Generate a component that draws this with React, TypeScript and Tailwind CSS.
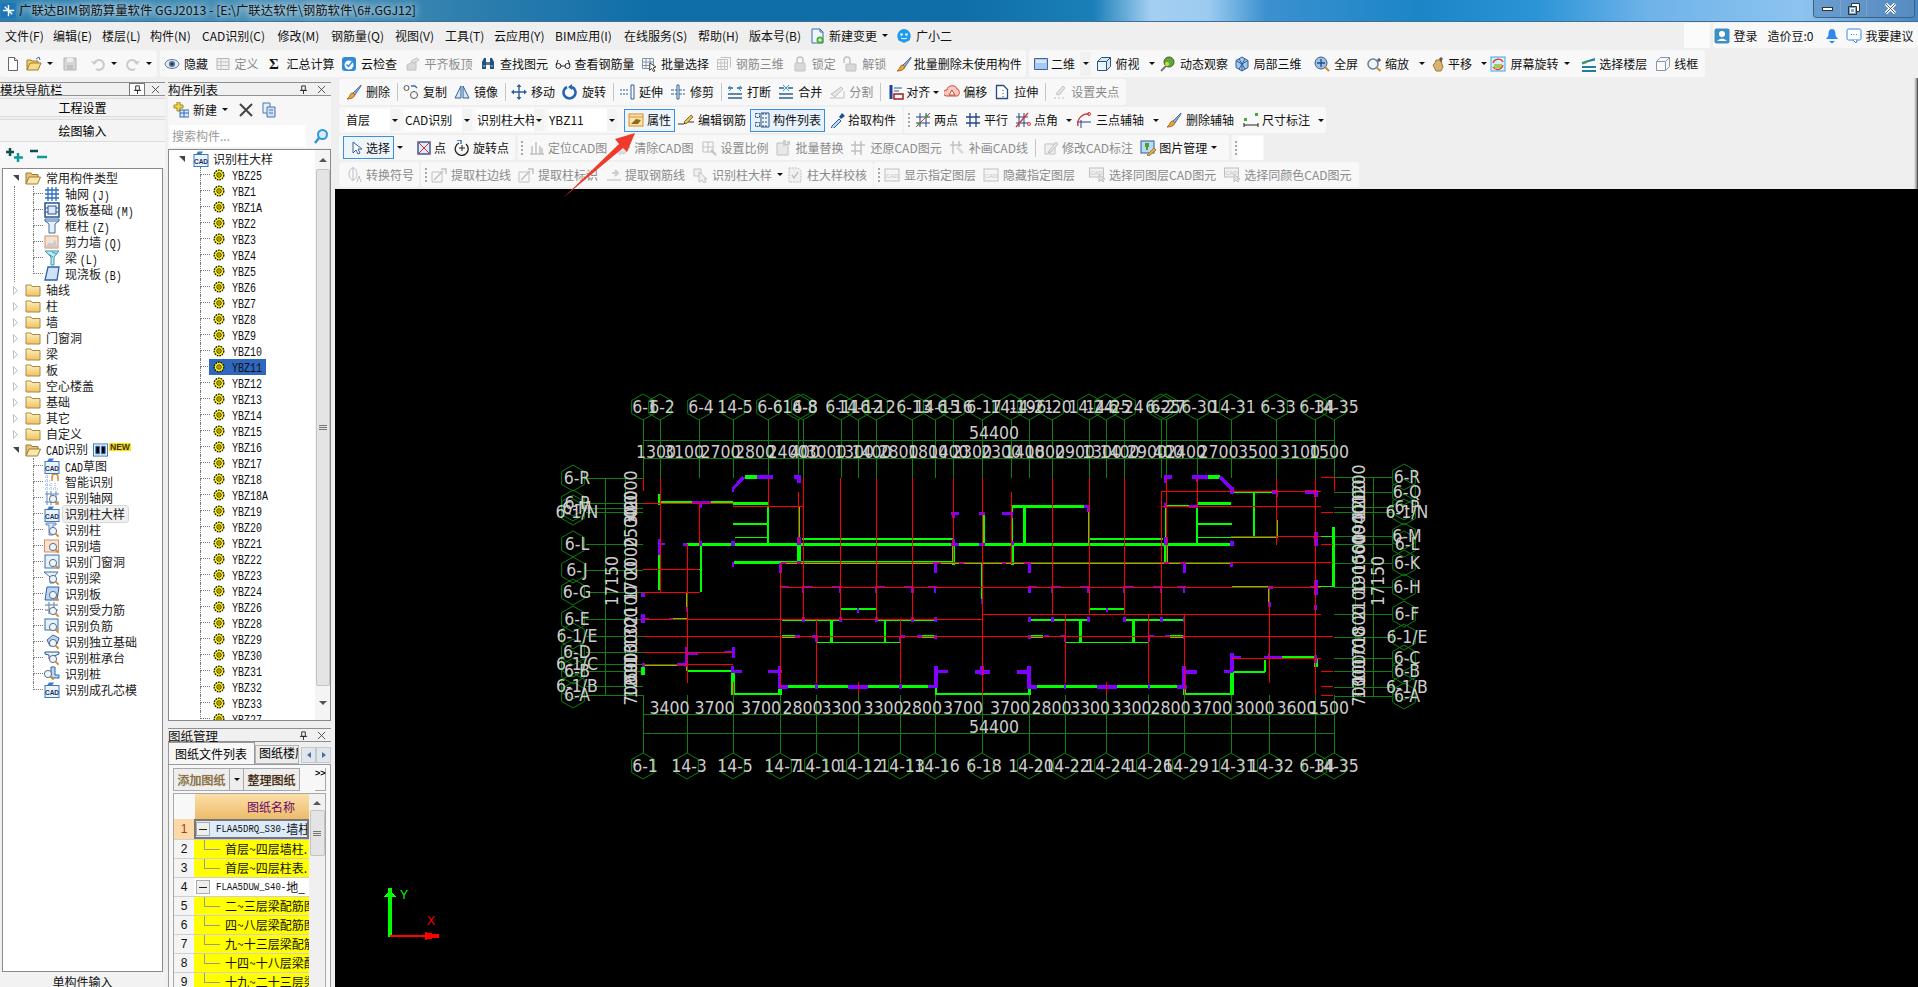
import React from 'react';
import clsx from 'clsx';

type Seg = [number, number, number, number, number];

const S = ({ children }: { children: React.ReactNode }) => (
  <svg viewBox="0 0 16 16" className="w-4 h-4 shrink-0" fill="none">{children}</svg>
);

// small toolbar and tree icons
const mag = (
  <g>
    <circle cx="9" cy="9" r="3.6" fill="#eef5fb" stroke="#5b6f85" />
    <path d="M11.6 11.6l3 3" stroke="#d98a2b" strokeWidth="2" />
  </g>
);
const cadBox = (
  <g>
    <rect x="1" y="3.5" width="14" height="12" fill="#eaf2fb" stroke="#3d78c0" />
    <path d="M3 3.5l2-3h5l-2 3" fill="#3d78c0" />
    <text x="8" y="13" textAnchor="middle" fontSize="6.5" fontWeight="700" fill="#16345e" fontFamily="Liberation Sans">CAD</text>
  </g>
);
const I: Record<string, React.ReactNode> = {
  doc: <S><path d="M3.5 1.5h6l3 3v10h-9z" fill="#fff" stroke="#666" /><path d="M9.5 1.5v3h3" fill="#ddd" stroke="#666" /></S>,
  open: <S><path d="M1 14V4h4l1 1h6v2" fill="#f0cf78" stroke="#a07a2a" /><path d="M1 14l3-7h11l-3 7z" fill="#f7dc8c" stroke="#a07a2a" /><path d="M10 3l3-2 1 3" stroke="#2f6fb5" /></S>,
  save: <S><path d="M2 2h12v12H2z" fill="#c9c9c9" stroke="#9a9a9a" /><path d="M5 2h6v4H5z" fill="#eee" /><path d="M5 9h6v5H5z" fill="#aaa" /></S>,
  undo: <S><path d="M4 8a5 5 0 1 1 2 5" stroke="#b8b8b8" strokeWidth="2" /><path d="M1 5l3 4 3-3" fill="#b8b8b8" /></S>,
  redo: <S><path d="M12 8a5 5 0 1 0-2 5" stroke="#b8b8b8" strokeWidth="2" /><path d="M15 5l-3 4-3-3" fill="#b8b8b8" /></S>,
  eye: <S><ellipse cx="8" cy="8" rx="7" ry="4.5" fill="#dfe8ef" stroke="#667c8e" /><circle cx="8" cy="8" r="3" fill="#4c7396" /><circle cx="8" cy="8" r="1.2" fill="#16304a" /></S>,
  table: <S><path d="M2 2.5h12v11H2z" fill="#eee" stroke="#999" /><path d="M2 6h12M2 9.500h12M6 2.500v11" stroke="#aaa" /></S>,
  cloud: <S><rect x="1" y="1" width="14" height="14" rx="3" fill="#2f8bd8" /><circle cx="8" cy="9" r="4.500" fill="#fff" /><path d="M5.500 8.500l2 2 4-5" stroke="#2f8bd8" strokeWidth="1.500" /></S>,
  level: <S><path d="M2 14V9l9-5v10z" fill="#ccc" stroke="#aaa" /><path d="M6 5l6-3 2 2-6 3z" fill="#ddd" stroke="#aaa" /></S>,
  binoc: <S><path d="M2 13V6l2-4h2v11zM14 13V6l-2-4h-2v11z" fill="#27507f" /><path d="M6 6h4v3H6z" fill="#55779c" /><path d="M2.800 10h2.500M10.700 10h2.500" stroke="#a9c3dd" /></S>,
  glass: <S><circle cx="3.500" cy="10" r="2.500" stroke="#222" /><circle cx="12.500" cy="10" r="2.500" stroke="#222" /><path d="M6 10h4M1 9l2-5M15 9l-2-5" stroke="#222" /></S>,
  batch: <S><path d="M1.500 2.500h11v10h-11zM1.500 6h11M1.500 9.500h11M5 2.500v10M9 2.500v10" stroke="#7f93ab" /><path d="M9 7l6 4-3 1 2 3-1.500 .5-2-3-2 2z" fill="#fff" stroke="#444" /></S>,
  grid3: <S><path d="M1.500 3.500h10v10h-10zM4.500 1.500h10v10M1.500 7h10M1.500 10.500h10M5 3.500v10M8.500 3.500v10" stroke="#aaa" /></S>,
  lock: <S><rect x="3" y="7" width="10" height="8" rx="1" fill="#ccc" stroke="#aaa" /><path d="M5 7V4a3 3 0 0 1 6 0v3" stroke="#aaa" strokeWidth="1.500" /></S>,
  unlock: <S><rect x="4" y="8" width="10" height="7" rx="1" fill="#ccc" stroke="#aaa" /><path d="M2 7V4a3 3 0 0 1 6 0v4" stroke="#aaa" strokeWidth="1.500" /></S>,
  brush: <S><path d="M15 1L7 9l2 2 6-9z" fill="#8eaed6" stroke="#56719a" /><path d="M7 9l-2 .5C4 11 3 14 1 15c3 0 7-1 8-4z" fill="#e8a23e" stroke="#a96b1c" /></S>,
  v2d: <S><path d="M1.500 2.500h13v11h-13z" fill="#a9c8ef" stroke="#3a66ae" /><path d="M3 4h10v3H3z" fill="#d8e7f8" /></S>,
  cube: <S><path d="M1.500 5.500l4-4h9v9l-4 4h-9z" fill="#d5e6f5" stroke="#28527f" /><path d="M1.500 5.500h9v9M10.500 5.500l4-4" stroke="#28527f" /><path d="M2 6h8v8H2z" fill="#eaf5fc" /></S>,
  orbit: <S><circle cx="9" cy="6" r="5" fill="#5fa63a" stroke="#2e6b1c" /><path d="M1 15l6-6" stroke="#777" strokeWidth="2" /><circle cx="7" cy="8" r="2" fill="#e9d049" /></S>,
  local3d: <S><path d="M8 1l6 3.500v7L8 15l-6-3.500v-7z" fill="#a8c7e8" stroke="#2c5c9a" /><path d="M8 8v7M2 4.500L8 8l6-3.500M5 3l6 10M11 3L5 13" stroke="#2c5c9a" /></S>,
  full: <S><circle cx="7" cy="7" r="6" fill="#9fbfe0" stroke="#38608f" /><path d="M7 3v8M3 7h8" stroke="#1f4f86" strokeWidth="1.300" /><path d="M11 11l4 4" stroke="#c98a2d" strokeWidth="2" /></S>,
  zoom: <S><circle cx="7" cy="8" r="5" fill="#eef5fb" stroke="#667f99" strokeWidth="1.500" /><path d="M11 12l3.500 3" stroke="#c98a2d" strokeWidth="2" /><path d="M13 2v4M11 4h4" stroke="#333" /></S>,
  hand: <S><path d="M3 9l2-2 1-3h5l1 4 1 3-2 4H6z" fill="#d7b36d" stroke="#9b7a3c" /><path d="M11 1v5M9 3h4" stroke="#333" /></S>,
  spin: <S><rect x="1" y="1" width="14" height="14" fill="#d7eefa" stroke="#45a3da" /><path d="M4 12V8h8v4z" fill="#a4cb5a" /><path d="M3 7a5.500 5.500 0 0 1 10-1M13 9a5.500 5.500 0 0 1-10 2" stroke="#e23b2e" strokeWidth="1.300" /></S>,
  floors: <S><path d="M1 6l13-4v2.500L1 7.500zM1 10h14v2H1zM1 14h14v2H1z" fill="#1f7f9e" /><path d="M1 7.500L6 6" stroke="#3fa14a" strokeWidth="2" /></S>,
  wire: <S><path d="M1.500 5.500l4-4h9v9l-4 4h-9zM1.500 5.500h9v9M10.500 5.500l4-4" stroke="#8796a9" /></S>,
  copy: <S><circle cx="3.500" cy="4" r="2.500" stroke="#555" /><circle cx="11" cy="11" r="3.500" stroke="#555" /><path d="M8 2h4l2 2" stroke="#2f6fb5" strokeWidth="1.300" /></S>,
  mirror: <S><path d="M7 2L1 14h6zM9 2l6 12H9z" stroke="#2d5f97" fill="#d6e4f2" /></S>,
  move: <S><path d="M8 1v14M1 8h14" stroke="#2d5f97" strokeWidth="1.400" /><path d="M8 0l2.500 3h-5zM8 16l2.500-3h-5zM0 8l3-2.500v5zM16 8l-3-2.500v5z" fill="#2d5f97" /></S>,
  rot: <S><path d="M5 3a6 6 0 1 0 5 0" stroke="#2464b0" strokeWidth="2.600" /><path d="M10 0v6L6 3z" fill="#2464b0" /></S>,
  extend: <S><path d="M1 6h9M1 10h9" stroke="#2d5f97" strokeDasharray="2 1" /><path d="M12 1h3v14h-3z" stroke="#2d5f97" /></S>,
  trim: <S><path d="M1 6h14M1 10h14" stroke="#2d5f97" strokeDasharray="3 1" /><path d="M7 1h2v14H7z" fill="#fff" stroke="#2d5f97" /></S>,
  cut: <S><path d="M1 4h5M10 4h5M1 14h14M1 10h14" stroke="#2d5f97" strokeWidth="1.300" /><path d="M2 7l3-3-3-2M14 7l-3-3 3-2" stroke="#2d9ad0" /></S>,
  merge: <S><path d="M1 10h14M1 14h14M1 4h5M10 4h5" stroke="#2d5f97" strokeWidth="1.300" /><path d="M5 1l3 3-3 3M11 1L8 4l3 3" stroke="#2d9ad0" /></S>,
  split: <S><path d="M1 14h14V7" stroke="#aaa" /><path d="M2 10l10-7 2 2-8 8z" fill="#ddd" stroke="#aaa" /></S>,
  align: <S><path d="M3 1v14" stroke="#1f3f9a" strokeWidth="3" /><path d="M6 15h9v-5H6z" stroke="#a01e1e" strokeWidth="1.500" /><path d="M6 4h8M6 7h5" stroke="#2d5f97" /></S>,
  offset: <S><path d="M2 12a3 3 0 0 1 1-6c0-5 9-6 10-1 3 0 3 7 0 7z" fill="#f7c9c0" stroke="#c9473a" /><path d="M5 11h6l-3-5z" fill="#fff" stroke="#c9473a" /></S>,
  stretch: <S><path d="M2.500 1.500h7l4 4v9h-11z" fill="#fff" stroke="#264b7d" strokeWidth="1.300" /><path d="M9 6v1M9 9v1M9 12v1" stroke="#264b7d" /></S>,
  grip: <S><path d="M3 14h2M7 14h2M11 14h2" stroke="#aaa" /><path d="M5 10l7-8 2 2-6 7z" fill="#ddd" stroke="#aaa" /></S>,
  prop: <S><rect x="1" y="2" width="14" height="12" fill="#fbe3b3" stroke="#e08a1e" /><path d="M1 5h14" stroke="#e08a1e" /><path d="M3 12l5-5 5 1-3 4z" fill="#8a6a1e" /></S>,
  rebar: <S><path d="M0 12h6l2-2h8" stroke="#333" /><path d="M6 10l7-7 2 2-7 7z" fill="#e6c25a" stroke="#8a6a1e" /></S>,
  list: <S><path d="M1.500 1.500h4v4h-4zM1.500 10.500h4v4h-4zM8 2h6M8 6h6M8 10h6M8 14h6" stroke="#27507f" strokeDasharray="2 1" /><path d="M7 1h8v14H7z" stroke="#27507f" /></S>,
  dropper: <S><path d="M2 14l7-7 2 2-7 7-3 1z" fill="#b8d7f2" stroke="#2d5f97" /><path d="M9 5l3-4 3 3-4 3z" fill="#1d4f96" /></S>,
  twopt: <S><path d="M5 1v14M11 1v14M1 5h14M1 11h14" stroke="#24448a" /><path d="M1 15L15 1" stroke="#d2342c" /><circle cx="4" cy="12" r="1.500" fill="#4a9e2f" /><circle cx="12" cy="4" r="1.500" fill="#4a9e2f" /></S>,
  para: <S><path d="M5 1v14M11 1v14M1 5h14M1 11h14" stroke="#24448a" strokeWidth="1.300" /></S>,
  angle: <S><path d="M4 1v14M9 1v14M1 5h12M1 11h12" stroke="#24448a" /><path d="M1 15L13 1" stroke="#d2342c" strokeWidth="1.300" /><circle cx="14" cy="12" r="1.500" stroke="#d2342c" /></S>,
  arc3: <S><path d="M5 16V8M1 10h14" stroke="#24448a" /><path d="M2 14A10 10 0 0 1 13 2" stroke="#d2342c" strokeWidth="1.300" /><circle cx="13" cy="2" r="1.500" stroke="#d2342c" /></S>,
  dim: <S><rect x="1" y="6" width="3" height="3" fill="#3cae3c" /><rect x="12" y="1" width="3" height="3" fill="#3cae3c" /><path d="M1 11v4M15 11v4M1 13h14" stroke="#222" /></S>,
  select: <S><path d="M4 2v11l3-3 2 4 2-1-2-4h4z" fill="#fff" stroke="#3a5f8f" /></S>,
  point: <S><rect x="2" y="2" width="12" height="12" fill="#dfe8f5" stroke="#27448a" strokeWidth="1.300" /><path d="M2 2l12 12M14 2L2 14" stroke="#d2342c" /></S>,
  rotpt: <S><path d="M5 3a6.500 6.500 0 1 0 7 1" stroke="#222" strokeWidth="1.300" /><path d="M8 5v6M5 8h6" stroke="#222" /><path d="M3 0h4v4" stroke="#2464b0" strokeWidth="1.300" /></S>,
  locate: <S><path d="M1 14h14M3 14V6M7 14V2M11 14V6M13 14V8" stroke="#aaa" strokeWidth="1.500" /></S>,
  erase: <S><path d="M2 10l6-7 6 4-6 7z" fill="#ddd" stroke="#aaa" /><circle cx="4" cy="13" r="2" fill="#ccc" /></S>,
  scale: <S><path d="M2 2h10v10H2zM2 7h10M7 2v10" stroke="#aaa" /><path d="M10 10l5 5" stroke="#aaa" strokeWidth="2" /></S>,
  swap: <S><path d="M2 3h8l3 3v9H2z" fill="#e2e2e2" stroke="#aaa" /><path d="M8 0h3v6H8zM12 1h3v4h-3z" fill="#bbb" /></S>,
  restore: <S><path d="M1 5h14M1 11h10M5 1v14M11 1v14" stroke="#aaa" strokeWidth="1.500" /></S>,
  patch: <S><path d="M1 5h12M4 1v13M10 1v6" stroke="#aaa" strokeWidth="1.500" /><path d="M7 8l6 6 2-2-6-5z" fill="#ccc" /></S>,
  modify: <S><path d="M2 4h10v10H2z" fill="#eee" stroke="#aaa" /><path d="M6 11l7-9 2 2-7 8-3 1z" fill="#ddd" stroke="#aaa" /></S>,
  pic: <S><rect x="1" y="1" width="13" height="12" fill="#bcd8f4" stroke="#2c5c9a" /><path d="M5 3h4v4H8v3H6V7H5z" fill="#4aa02c" /><path d="M7 15l7-7 2 2-7 6z" fill="#e6b23d" stroke="#9b7a3c" /></S>,
  symbol: <S><ellipse cx="6" cy="7" rx="4" ry="6" stroke="#aaa" /><path d="M6 0v14M10 15l2-6 2 6" stroke="#aaa" /></S>,
  edgeOut: <S><path d="M1 15V5h10v10z" stroke="#aaa" /><path d="M3 13l9-9M10 2h5v5" stroke="#aaa" strokeWidth="1.500" /></S>,
  pull: <S><path d="M1 12h14v2H1z" fill="#ccc" /><path d="M6 6h6M9 3l3 3-3 3" stroke="#bbb" strokeWidth="2" /></S>,
  cursor: <S><path d="M2 2h7v7H2z" fill="#eee" stroke="#aaa" /><path d="M7 5v10l3-2 2 3 2-1-2-3h3z" fill="#eee" stroke="#aaa" /></S>,
  check: <S><path d="M2 1h9l3 3v11H2z" fill="#eee" stroke="#aaa" strokeDasharray="2 1" /><path d="M5 8l2 3 4-6" stroke="#aaa" strokeWidth="1.500" /></S>,
  cadGray: <S><rect x="1" y="2" width="14" height="12" fill="#f5f5f5" stroke="#aaa" /><text x="8" y="10.500" textAnchor="middle" fontSize="6" fill="#aaa" fontFamily="Liberation Sans">CAD</text></S>,
  cadSel: <S><rect x="0.500" y="1" width="14" height="9" fill="#eee" stroke="#aaa" /><text x="7.500" y="8" textAnchor="middle" fontSize="6" fill="#aaa" fontFamily="Liberation Sans">CAD</text><path d="M10 8v7l2-2 2 2 1-1-2-2h3z" fill="#ddd" stroke="#aaa" /></S>,
  newdoc: <S><path d="M3 1h8l3 3v11H3z" fill="#f0f6fd" stroke="#2f6fb5" /><path d="M11 1v3h3" stroke="#2f6fb5" /><circle cx="11" cy="12" r="3.500" fill="#4dab2f" /><path d="M11 10v4M9 12h4" stroke="#fff" /></S>,
  buddy: <S><path d="M8 1a7 7 0 0 1 6 10c-1 3-3 2-4 3-1 1-3 1-4 0-1-1-3 0-4-3A7 7 0 0 1 8 1z" fill="#1e9be8" /><circle cx="5.500" cy="6.500" r="1.300" fill="#fff" /><circle cx="10.500" cy="6.500" r="1.300" fill="#fff" /><path d="M5 10q3 2 6 0" stroke="#fff" /></S>,
  user: <S><rect x="0.500" y="0.500" width="15" height="15" rx="2" fill="#3f8fc7" /><circle cx="8" cy="6" r="3" fill="#fff" /><path d="M3 13q5-5 10 0z" fill="#fff" /></S>,
  bell: <S><path d="M8 1c3 0 3.500 3 3.500 6 0 2 2.500 3 2.500 4H2c0-1 2.500-2 2.500-4C4.500 4 5 1 8 1z" fill="#2e86ee" /><path d="M5 13h6l-3 2.500z" fill="#2e86ee" /></S>,
  talk: <S><rect x="1" y="1" width="14" height="11" rx="1.500" fill="#fff" stroke="#2e86ee" /><path d="M7 12l3 3 1-3" fill="#fff" stroke="#2e86ee" /><path d="M5 6.500h1M7.500 6.500h1M10 6.500h1" stroke="#2e86ee" /></S>,
  plusdoc: <S><path d="M1 3h3V0h3v3h3v3H7v3H4V6H1z" fill="#f0d24a" stroke="#a58a1e" /><rect x="7" y="8" width="9" height="7" fill="#dbe9f7" stroke="#2f6fb5" /><path d="M7 11h9M11 8v7" stroke="#2f6fb5" /></S>,
  x: <S><path d="M2 2l12 12M14 2L2 14" stroke="#444" strokeWidth="2" /></S>,
  dup: <S><path d="M2 1h7v10H2z" fill="#e8f0fa" stroke="#4877ad" /><path d="M6 5h8v10H6z" fill="#cfe0f4" stroke="#4877ad" /><path d="M8 8h4M8 11h4" stroke="#4877ad" /></S>,
  search: <S><circle cx="9.500" cy="6.500" r="4.500" fill="#d6ecfb" stroke="#3097d8" strokeWidth="2" /><path d="M6 10l-4 5" stroke="#3097d8" strokeWidth="2.500" /></S>,
  folderOpen: <S><path d="M1 14V3h5l1 1.500h6V7" fill="#e7c56f" stroke="#9b7a3c" /><path d="M1 14l3-7h11.500l-3 7z" fill="#fbe7a8" stroke="#9b7a3c" /></S>,
  folder: <S><path d="M1 14V3h5l1 1.500h8V14z" fill="url(#fld)" stroke="#a98a45" /></S>,
  axis: <S><path d="M4 1v14M8 1v14M12 1v14M1 4h14M1 8h14M1 12h14" stroke="#2f6ec0" strokeWidth="1.300" /></S>,
  raft: <S><rect x="1" y="1" width="14" height="14" stroke="#24528e" strokeWidth="1.500" /><rect x="4" y="4" width="8" height="8" fill="#dbe9f7" stroke="#24528e" /><path d="M1 6h3M1 10h3M12 6h3M12 10h3" stroke="#24528e" /></S>,
  col: <S><path d="M1 1h14v2l-4 3v9H5V6L1 3z" fill="#e7eff7" stroke="#3b6ea8" /><path d="M1 3h14" stroke="#3b6ea8" /></S>,
  wall: <S><rect x="1" y="2" width="13" height="12" fill="#f3e3d6" stroke="#d8905d" /><path d="M2 12l3-4 3 2 3-5 2 8H2z" fill="#ccc" /></S>,
  beam: <S><path d="M1 1h14l-5 6v8H7V7z" fill="#bfe6f3" stroke="#3796b5" /><path d="M4 4l5 3M8 2l5 2" stroke="#3796b5" /></S>,
  slab: <S><path d="M4 1h11l-2 13H1z" fill="#cfe2f6" stroke="#2a62ad" strokeWidth="1.300" /></S>,
  cad: <S>{cadBox}</S>,
  smart: <S><path d="M1 3h4M1 7h6M1 11h6M1 15h14M3 1v14M7 9v6M11 9v6" stroke="#7aa9dc" strokeDasharray="1 1" /><path d="M8 7V3a3 3 0 0 1 6 0v4" stroke="#d98a2b" strokeWidth="1.500" /></S>,
  dAxis: <S><path d="M3 1v14M7 1v14M12 1v14M1 4h14M1 12h14" stroke="#5c86c2" />{mag}</S>,
  dCad: <S>{cadBox}</S>,
  dCol: <S><path d="M2 1h10v2H9v10H5V3H2z" fill="#dbe9f7" stroke="#5c86c2" />{mag}</S>,
  dWall: <S><rect x="0.500" y="2" width="14" height="12" fill="#f9e2d3" stroke="#df8b5f" />{mag}</S>,
  dDoor: <S><rect x="1" y="1" width="14" height="13" fill="#e8f1fa" stroke="#3c6fb5" />{mag}</S>,
  dBeam: <S><path d="M0 2h14l-4 5v6H6V7z" fill="#e8f1fa" stroke="#3c6fb5" />{mag}</S>,
  dSlab: <S><path d="M3 1h12l-2 13H1z" fill="#bcd6f2" stroke="#2a62ad" />{mag}</S>,
  dBar: <S><path d="M1 3h13M1 8h13M5 0v12M10 0v12" stroke="#8a9fb8" strokeWidth="1.500" />{mag}</S>,
  dNeg: <S><rect x="1" y="1" width="13" height="11" fill="#e8f1fa" stroke="#2f6fb5" />{mag}</S>,
  dFound: <S><path d="M3 6l6-5 6 3-2 6-7 2z" fill="#bcd6f2" stroke="#2a62ad" />{mag}</S>,
  dCap: <S><path d="M1 2h14v2l-5 2v3H5V5L1 4z" fill="#e8f1fa" stroke="#24528e" />{mag}</S>,
  dPile: <S><path d="M7 1h4v8h4v3H7z" fill="#bcd6f2" stroke="#2a62ad" /><g transform="translate(-5 -1)">{mag}</g></S>,
  gear: <S><circle cx="8" cy="8" r="5.500" fill="#fff200" stroke="#111" strokeDasharray="2 1" strokeWidth="1.500" /><circle cx="8" cy="8" r="2.500" fill="#fff200" stroke="#111" /><circle cx="8" cy="8" r=".8" fill="#111" /></S>,
};

const Caret = ({ className }: { className?: string }) => (
  <span className={clsx('w-0 h-0 border-x-[3px] border-t-[3px] border-x-transparent border-t-[#111] shrink-0', className)} />
);

const Sep = ({ tight }: { tight?: boolean }) => <span className={clsx('w-px h-[18px] bg-[#c6c6c6] shrink-0', tight && '-mr-[2px]')} />;

const Grip = ({ className }: { className?: string }) => (
  <span className={clsx('flex flex-col gap-[2px] shrink-0', className)}>
    <span className="w-[2px] h-[2px] bg-[#a8a8a8]" />
    <span className="w-[2px] h-[2px] bg-[#a8a8a8]" />
    <span className="w-[2px] h-[2px] bg-[#a8a8a8]" />
    <span className="w-[2px] h-[2px] bg-[#a8a8a8]" />
  </span>
);

type ToolProps = { icon: string; label?: string; off?: boolean; dd?: boolean; ddWide?: boolean; gap?: string; box?: string; className?: string };

const Tool = ({ icon, label, off, dd, ddWide, gap, box, className }: ToolProps) => (
  <div className={clsx('flex items-center whitespace-nowrap shrink-0', gap ?? 'gap-[4px]', box ?? 'h-[22px]', off ? 'text-[#8b8b8b]' : 'text-[#111]', className)}>
    <span className={off ? 'flex opacity-70' : 'flex'}>{I[icon]}</span>
    {label && <span>{label}</span>}
    {dd && <Caret className="ml-[1px]" />}
    {ddWide && <Caret className="ml-[5px]" />}
  </div>
);

const Band = ({ children, className }: { children: React.ReactNode; className?: string }) => (
  <div className={clsx('flex items-center rounded-[3px] bg-[#f8f8f8] shrink-0', className)}>{children}</div>
);

const Combo = ({ text, className }: { text: string; className: string }) => (
  <div className={clsx('flex items-center h-[22px] bg-white shrink-0', className)}>
    <span className="flex-1 overflow-hidden whitespace-nowrap pl-[1px] text-[#111]">{text}</span>
    <span className="w-[10px] h-full bg-[#f3f3f3] flex items-center justify-center"><Caret /></span>
  </div>
);

const TitleBar = () => (
  <div className="relative h-[22px] shrink-0 border-b border-[#3f6f94] bg-[linear-gradient(90deg,#2a7faf_0%,#4f93b8_16%,#2f7fae_24%,#0f6ea8_34%,#0f6ea8_50%,#1a7fb8_57%,#a3cff2_60%,#9ccbf0_63%,#3c90d0_66%,#1a86c6_74%,#2a94d6_80%,#6fb3ea_86%,#8dc4ef_94%,#4a85c0_100%)] flex items-start">
    <svg viewBox="0 0 16 16" className="w-[15px] h-[15px] ml-[1px] mt-[3px] shrink-0">
      <rect width="16" height="16" fill="#1d74b7" />
      <path d="M8 2v12M2 8h12M4 4l3 3M12 12l-3-3" stroke="#fff" strokeWidth="1.500" />
    </svg>
    <span className="ml-[3px] mt-[3px] text-[12.400px] leading-[15px] text-[#111] whitespace-nowrap [text-shadow:0_0_6px_#dfeef8,0_0_10px_#dfeef8]">
      广联达BIM钢筋算量软件 GGJ2013 - [E:\广联达软件\钢筋软件\6#.GGJ12]
    </span>
    <div className="ml-auto mr-[3px] flex h-[18px] rounded-b-[4px] border border-t-0 border-[#38618c] overflow-hidden">
      <span className="w-[27px] flex items-center justify-center border-r border-[#7da4c8] bg-[#5c8fc2]/70"><span className="w-[11px] h-[4px] bg-white border border-[#333]" /></span>
      <span className="w-[26px] flex items-center justify-center border-r border-[#7da4c8] bg-[#5c8fc2]/70">
        <svg viewBox="0 0 12 12" className="w-3 h-3"><path d="M3.500 .5h8v8h-8z" fill="#fff" stroke="#333" /><path d="M.5 3.500h8v8h-8z" fill="#7aa6d0" stroke="#333" /><path d="M2.500 5.500h4v4h-4z" fill="#7aa6d0" stroke="#fff" /></svg>
      </span>
      <span className="w-[47px] flex items-center justify-center bg-[#5c8fc2]/70">
        <svg viewBox="0 0 14 12" className="w-[13px] h-[11px]"><path d="M2 1l10 10M12 1L2 11" stroke="#fff" strokeWidth="3.500" /><path d="M2 1l10 10M12 1L2 11" stroke="#3a4f63" strokeWidth="1" /></svg>
      </span>
    </div>
  </div>
);

const menus: [string, string][] = [
  ['文件(F)', 'w-[48px]'], ['编辑(E)', 'w-[49px]'], ['楼层(L)', 'w-[48px]'], ['构件(N)', 'w-[52px]'], ['CAD识别(C)', 'w-[75.500px]'], ['修改(M)', 'w-[53.500px]'], ['钢筋量(Q)', 'w-[64px]'],
  ['视图(V)', 'w-[50px]'], ['工具(T)', 'w-[49px]'], ['云应用(Y)', 'w-[61px]'], ['BIM应用(I)', 'w-[69px]'], ['在线服务(S)', 'w-[74px]'], ['帮助(H)', 'w-[51px]'], ['版本号(B)', 'w-[60px]'],
];

const MenuBar = () => (
  <div className="flex items-center h-[27px] shrink-0 pl-[5px] text-[#111]">
    {menus.map(([m, w]) => <span key={m} className={clsx('whitespace-nowrap shrink-0', w)}>{m}</span>)}
    <Tool icon="newdoc" label="新建变更" dd />
    <Tool icon="buddy" label="广小二" className="ml-[8px]" />
    <div className="ml-auto flex items-center h-[25px]">
      <span className="w-[26px] h-[25px] bg-[#fbfbfb] mr-[3px]" />
      <Band className="h-[25px] w-[205px] pl-[1px]">
        <Tool icon="user" label="登录" gap="gap-[3.500px]" />
        <span className="ml-[10px]">造价豆:0</span>
        <span className="ml-[10px] flex">{I.bell}</span>
        <Tool icon="talk" label="我要建议" className="ml-[6px]" />
      </Band>
    </div>
  </div>
);

const MainToolbar = () => (
  <div className="flex items-center h-[29px] shrink-0 gap-[3px]">
    <Band className="h-[27px] w-[157px] pl-[5px]">
      <Tool icon="doc" />
      <Tool icon="open" dd className="ml-[5px]" />
      <Tool icon="save" off className="ml-[9px]" />
      <span className="ml-[6px]"><Sep /></span>
      <Tool icon="undo" off className="ml-[6px]" dd />
      <Tool icon="redo" off className="ml-[8px]" dd />
    </Band>
    <Band className="h-[27px] w-[866px] pl-[4px] gap-[6.500px]">
      <Tool icon="eye" label="隐藏" />
      <Tool icon="table" label="定义" off />
      <div className="flex items-center gap-[5.500px] ml-[4px] text-[#111]"><span className="w-[12px] text-[15px] font-bold font-['Liberation_Serif',serif]">Σ</span><span>汇总计算</span></div>
      <Tool icon="cloud" label="云检查" />
      <Tool icon="level" label="平齐板顶" off className="ml-[1px]" />
      <Tool icon="binoc" label="查找图元" className="ml-[1px]" />
      <Tool icon="glass" label="查看钢筋量" />
      <Tool icon="batch" label="批量选择" />
      <Tool icon="grid3" label="钢筋三维" off />
      <Tool icon="lock" label="锁定" off className="ml-[1.500px]" />
      <Tool icon="unlock" label="解锁" off />
      <Tool icon="brush" label="批量删除未使用构件" gap="gap-[2px]" className="ml-[3px]" />
    </Band>
    <Band className="h-[27px] w-[676px] pl-[4px]">
      <Tool icon="v2d" label="二维" gap="gap-[2px]" />
      <span className="ml-[5px] w-[11px] h-[24px] bg-[#f1f1f1] flex items-center justify-center"><Caret /></span>
      <Tool icon="cube" label="俯视" className="ml-[5px]" gap="gap-[3.500px]" />
      <Caret className="ml-[9.500px]" />
      <Tool icon="orbit" label="动态观察" className="ml-[5px]" />
      <Tool icon="local3d" label="局部三维" className="ml-[6px]" gap="gap-[3.500px]" />
      <span className="ml-[8.500px]"><Sep /></span>
      <Tool icon="full" label="全屏" className="ml-[4px]" />
      <Tool icon="zoom" label="缩放" className="ml-[8px]" gap="gap-[3px]" />
      <Caret className="ml-[10px]" />
      <Tool icon="hand" label="平移" className="ml-[5px]" gap="gap-[2px]" />
      <Caret className="ml-[9px]" />
      <Tool icon="spin" label="屏幕旋转" className="ml-[3px]" gap="gap-[4.500px]" dd />
      <span className="ml-[4.500px]"><Sep /></span>
      <Tool icon="floors" label="选择楼层" className="ml-[6.500px]" gap="gap-[2px]" />
      <Tool icon="wire" label="线框" className="ml-[8px]" gap="gap-[3px]" />
    </Band>
  </div>
);

const activeBox = 'h-[23px] border border-[#3c8ee0]';

const DrawToolbars = () => (
  <div className="flex flex-col h-[111px] shrink-0 pl-[4px] bg-[linear-gradient(270deg,#222_0,#888_1px,#efefef_4px)]">
    <div className="h-[28px] flex items-center shrink-0">
      <Band className="h-[26px] gap-[7px] pl-[7px] w-[787px]">
        <Tool icon="brush" label="删除" />
        <Sep tight />
        <Tool icon="copy" label="复制" />
        <Tool icon="mirror" label="镜像" />
        <Sep tight />
        <Tool icon="move" label="移动" />
        <Tool icon="rot" label="旋转" />
        <Sep tight />
        <Tool icon="extend" label="延伸" />
        <Tool icon="trim" label="修剪" />
        <Sep tight />
        <Tool icon="cut" label="打断" />
        <Tool icon="merge" label="合并" />
        <Tool icon="split" label="分割" off />
        <Sep tight />
        <Tool icon="align" label="对齐" dd className="ml-[2px]" gap="gap-[2px]" />
        <Tool icon="offset" label="偏移" className="-ml-[2px]" gap="gap-[3px]" />
        <Tool icon="stretch" label="拉伸" />
        <Sep tight />
        <Tool icon="grip" label="设置夹点" off />
      </Band>
    </div>
    <div className="h-[28px] flex items-center gap-[1px] shrink-0">
      <Band className="h-[26px] w-[564px] pl-[6px]">
        <Combo text="首层" className="w-[55px]" />
        <Combo text="CAD识别" className="w-[68px] ml-[4px]" />
        <Combo text="识别柱大样" className="w-[68px] ml-[4px]" />
        <Combo text="YBZ11" className="w-[69px] ml-[4px]" />
        <span className="ml-[6px]"><Sep /></span>
        <Tool icon="prop" label="属性" box={activeBox} gap="gap-[3px]" className="ml-[1px] w-[51px] bg-[#edf5fc] pl-[3px]" />
        <Tool icon="rebar" label="编辑钢筋" className="ml-[3px]" />
        <Tool icon="list" label="构件列表" box={activeBox} gap="gap-[3px]" className="ml-[4px] w-[75px] bg-[#e6f1fb] pl-[3px]" />
        <Tool icon="dropper" label="拾取构件" className="ml-[5px]" gap="gap-[2px]" />
      </Band>
      <Band className="h-[26px] w-[422px] pl-[4px] gap-[7px]">
        <Grip className="-mr-[2px]" />
        <Tool icon="twopt" label="两点" gap="gap-[3px]" />
        <Tool icon="para" label="平行" gap="gap-[3px]" />
        <Tool icon="angle" label="点角" gap="gap-[3px]" ddWide />
        <Tool icon="arc3" label="三点辅轴" ddWide className="-ml-[3px]" />
        <Tool icon="brush" label="删除辅轴" />
        <Tool icon="dim" label="尺寸标注" gap="gap-[3px]" ddWide className="ml-[2px]" />
      </Band>
    </div>
    <div className="h-[27px] flex items-center gap-[3px] shrink-0">
      <Band className="h-[25px] w-[176px] pl-[4px]">
        <Tool icon="select" label="选择" box={activeBox} gap="gap-[1px]" className="w-[51px] bg-[#edf5fc] pl-[5px]" />
        <Caret className="ml-[3px]" />
        <span className="ml-[6px]"><Sep /></span>
        <Tool icon="point" label="点" className="ml-[7px]" gap="gap-[2px]" />
        <Tool icon="rotpt" label="旋转点" className="ml-[8px]" gap="gap-[3px]" />
      </Band>
      <Band className="h-[25px] w-[711px] pl-[3px] gap-[7px]">
        <Grip className="-mr-[1px]" />
        <Tool icon="locate" label="定位CAD图" off gap="gap-[3px]" />
        <Tool icon="erase" label="清除CAD图" off className="ml-[2px]" gap="gap-[2px]" />
        <Tool icon="scale" label="设置比例" off className="ml-[1px]" gap="gap-[3px]" />
        <Tool icon="swap" label="批量替换" off />
        <Tool icon="restore" label="还原CAD图元" off />
        <Tool icon="patch" label="补画CAD线" off />
        <Sep />
        <Tool icon="modify" label="修改CAD标注" off gap="gap-[3px]" />
        <Tool icon="pic" label="图片管理" dd gap="gap-[3px]" />
      </Band>
      <Band className="h-[25px] w-[32px] pl-[3px] gap-[2px]">
        <Grip />
        <span className="w-[24px] h-[24px] bg-white" />
      </Band>
    </div>
    <div className="h-[27px] flex items-center shrink-0">
      <Band className="h-[25px] w-[80px] pl-[8px]"><Tool icon="symbol" label="转换符号" off gap="gap-[3px]" /></Band>
      <Band className="h-[25px] w-[452px] ml-[2px] pl-[4px] gap-[7px]">
        <Grip className="-mr-[3px]" />
        <Tool icon="edgeOut" label="提取柱边线" off />
        <Tool icon="edgeOut" label="提取柱标识" off />
        <Tool icon="pull" label="提取钢筋线" off className="ml-[1px]" gap="gap-[3px]" />
        <Tool icon="cursor" label="识别柱大样" off dd />
        <Tool icon="check" label="柱大样校核" off className="-ml-[3px]" />
      </Band>
      <Band className="h-[25px] w-[485px] ml-[1px] pl-[4px] gap-[6px]">
        <Grip className="-mr-[2px]" />
        <Tool icon="cadGray" label="显示指定图层" off gap="gap-[4px]" />
        <Tool icon="cadGray" label="隐藏指定图层" off className="ml-[1px]" />
        <span className="ml-[2px]"><Sep /></span>
        <Tool icon="cadSel" label="选择同图层CAD图元" off />
        <Tool icon="cadSel" label="选择同颜色CAD图元" off className="ml-[2px]" />
      </Band>
    </div>
  </div>
);

const DockHeader = ({ title, boxed, className }: { title: string; boxed?: boolean; className?: string }) => (
  <div className={clsx('flex items-center h-[14px] border-y border-[#8f8f8f] bg-[#f0f0f0] shrink-0 whitespace-nowrap text-[12.500px] leading-[13px] text-[#111]', className)}>
    <span className="flex-1">{title}</span>
    <span className={clsx('w-[16px] h-[13px] flex items-center justify-center', boxed && 'border border-[#777] bg-white')}>
      <svg viewBox="0 0 10 10" className="w-[9px] h-[9px]"><path d="M3 1h4v5H3zM1 6h8M5 6v4" stroke="#222" fill="none" /></svg>
    </span>
    <span className="w-[20px] flex items-center justify-center">
      <svg viewBox="0 0 10 10" className="w-[9px] h-[9px]"><path d="M1 1l8 8M9 1L1 9" stroke="#444" /></svg>
    </span>
  </div>
);

const Conn = ({ last }: { last?: boolean }) => (
  <span className="flex flex-col w-[10px] h-4 shrink-0">
    <span className="h-2 border-l border-b border-dotted border-[#777]" />
    {!last && <span className="h-2 border-l border-dotted border-[#777]" />}
  </span>
);

const Tri = ({ open }: { open?: boolean }) =>
  open ? (
    <span className="w-0 h-0 border-l-[6px] border-t-[6px] border-l-transparent border-t-[#444] shrink-0" />
  ) : (
    <svg viewBox="0 0 6 10" className="w-[5px] h-[9px] shrink-0"><path d="M.5 .5L5.500 5 .5 9.500z" fill="#fff" stroke="#aaa" /></svg>
  );

// the original's half-width latin is a narrow, tall bitmap face
const Latin = ({ children }: { children: React.ReactNode }) => (
  <span className="inline-block scale-y-[1.3] font-['Liberation_Mono',monospace] text-[10px] text-[#111]">{children}</span>
);

const TopNode = ({ label, open, icon = 'folder', extra }: { label: React.ReactNode; open?: boolean; icon?: string; extra?: React.ReactNode }) => (
  <div className="flex items-center h-4 pl-[9px]">
    <span className="w-[7px] flex justify-center"><Tri open={open} /></span>
    <span className="w-[6px]" />
    <span className="flex">{I[open ? 'folderOpen' : icon]}</span>
    <span className="ml-[5px] whitespace-nowrap">{label}</span>
    {extra}
  </div>
);

const ChildNode = ({ icon, label, last, hot }: { icon: string; label: React.ReactNode; last?: boolean; hot?: boolean }) => (
  <div className="flex items-center h-4">
    <Conn last={last} />
    <span className="flex ml-[1px]">{I[icon]}</span>
    <span className={clsx('ml-[3px] pl-[2px] pr-[3px] whitespace-nowrap h-4 leading-[16px]', hot && 'bg-[#f0f0f0] rounded-[2px] outline outline-[#d8d8d8]')}>{label}</span>
  </div>
);

const typeNodes: [string, React.ReactNode][] = [
  ['axis', <>轴网 <Latin>(J)</Latin></>],
  ['raft', <>筏板基础 <Latin>(M)</Latin></>],
  ['col', <>框柱 <Latin>(Z)</Latin></>],
  ['wall', <>剪力墙 <Latin>(Q)</Latin></>],
  ['beam', <>梁 <Latin>(L)</Latin></>],
  ['slab', <>现浇板 <Latin>(B)</Latin></>],
];
const cadNodes: [string, string][] = [
  ['cad', 'CAD草图'], ['smart', '智能识别'], ['dAxis', '识别轴网'], ['dCad', '识别柱大样'], ['dCol', '识别柱'], ['dWall', '识别墙'],
  ['dDoor', '识别门窗洞'], ['dBeam', '识别梁'], ['dSlab', '识别板'], ['dBar', '识别受力筋'], ['dNeg', '识别负筋'], ['dFound', '识别独立基础'],
  ['dCap', '识别桩承台'], ['dPile', '识别桩'], ['cad', '识别成孔芯模'],
];
const folders = ['轴线', '柱', '墙', '门窗洞', '梁', '板', '空心楼盖', '基础', '其它', '自定义'];

const NavPanel = () => (
  <div className="w-[165px] mr-[3px] shrink-0 flex flex-col pt-[4px] h-full">
    <DockHeader title="模块导航栏" boxed />
    <div className="h-[19px] mt-[2px] bg-[#f4f4f4] border-y border-[#dcdcdc] flex items-center justify-center shrink-0">工程设置</div>
    <div className="h-[23px] mt-[2px] bg-[#f4f4f4] border-y border-[#dcdcdc] flex items-center justify-center shrink-0">绘图输入</div>
    <div className="h-[26px] shrink-0 flex items-center pl-[6px] gap-[6px] bg-[#f7f7f7]">
      <svg viewBox="0 0 18 14" className="w-[18px] h-[14px]"><path d="M4 0v8M0 4h8" stroke="#0f4f4f" strokeWidth="2.500" /><path d="M12 5v9M8 9.500h9" stroke="#0f9a9a" strokeWidth="2.500" /></svg>
      <svg viewBox="0 0 18 14" className="w-[18px] h-[14px]"><path d="M0 3h8" stroke="#0f4f4f" strokeWidth="2.500" /><path d="M7 9h10" stroke="#0f9a9a" strokeWidth="2.500" /></svg>
    </div>
    <div className="flex-1 ml-[2px] w-[161px] border border-[#8a8a8a] bg-white overflow-hidden pt-[1px] min-h-0 text-[#222]">
      <TopNode label="常用构件类型" open />
      <div className="ml-[11px] border-l border-dotted border-[#777] pl-[18px]">
        {typeNodes.map(([icon, label], i) => <ChildNode key={i} icon={icon} label={label} last={i === typeNodes.length - 1} />)}
      </div>
      {folders.map((f) => <TopNode key={f} label={f} />)}
      <TopNode
        label={<><Latin>CAD</Latin>识别</>}
        open
        extra={
          <>
            <svg viewBox="0 0 16 14" className="w-[15px] h-[14px] ml-[5px]"><rect x=".5" y=".5" width="15" height="13" fill="#e6f1fb" stroke="#3a78c0" /><path d="M3 3h4v8H3zM9 3h4v8H9z" stroke="#3a78c0" /></svg>
            <span className="ml-[1px] -mt-[6px] px-[1px] bg-[#ffe100] text-[8.500px] leading-[8px] font-bold text-[#333] font-['Liberation_Sans',sans-serif]">NEW</span>
          </>
        }
      />
      <div className="ml-[30px]">
        {cadNodes.map(([icon, label], i) => (
          <ChildNode
            key={label + i}
            icon={icon}
            label={label === 'CAD草图' ? <><Latin>CAD</Latin>草图</> : label}
            hot={label === '识别柱大样'}
            last={i === cadNodes.length - 1}
          />
        ))}
      </div>
    </div>
    <div className="h-[15px] shrink-0 bg-[#f2f2f2] overflow-hidden text-center pt-[3px] text-[#111]">单构件输入</div>
  </div>
);

const ybz = ['25', '1', '1A', '2', '3', '4', '5', '6', '7', '8', '9', '10', '11', '12', '13', '14', '15', '16', '17', '18', '18A', '19', '20', '21', '22', '23', '24', '26', '28', '29', '30', '31', '32', '33', '27'];

const ScrollArrow = ({ down }: { down?: boolean }) => (
  <span className={clsx('w-0 h-0 border-x-[4px] border-x-transparent', down ? 'border-t-[4px] border-t-[#555]' : 'border-b-[4px] border-b-[#555]')} />
);

const Thumb = ({ className }: { className: string }) => (
  <div className={clsx('flex flex-col items-center justify-center gap-[1px] rounded-[2px] border border-[#c4c4c4] bg-[#e4e4e4]', className)}>
    <span className="w-[8px] h-px bg-[#777]" />
    <span className="w-[8px] h-px bg-[#777]" />
    <span className="w-[8px] h-px bg-[#777]" />
  </div>
);

const SheetRow = ({ n, label, head, tail, selected }: { n: number; label: string; head?: boolean; tail?: string; selected?: boolean }) => (
  <div className={clsx('flex border-b border-[#cfcfcf]', selected ? 'h-[21px]' : 'h-[19px]')}>
    <span className={clsx("w-[20px] shrink-0 flex items-center justify-center font-['Liberation_Sans',sans-serif]", selected ? 'bg-[#fcd9a6] text-[#a03a2a]' : 'bg-[#f4f4f4]')}>{n}</span>
    {head ? (
      <span className={clsx('flex-1 min-w-0 flex items-center overflow-hidden whitespace-nowrap', selected ? 'border-2 border-[#777] bg-[#dcecfb]' : 'bg-white pl-[2px]')}>
        <span className="w-[14px] h-[14px] mr-[6px] shrink-0 border border-[#aaa] bg-[#eee] flex items-center justify-center"><span className="w-[8px] h-px bg-[#222]" /></span>
        <span className="inline-block scale-y-[1.3] font-['Liberation_Mono',monospace] text-[9px]">{label}</span>{tail}
      </span>
    ) : (
      <span className="flex-1 min-w-0 flex items-center overflow-hidden whitespace-nowrap bg-[#ffff00] pl-[10px]">
        <span className="w-[16px] h-[10px] mb-[9px] mr-[5px] shrink-0 border-l border-b border-[#999]" />
        {label}
      </span>
    )}
  </div>
);

const ListPanel = () => (
  <div className="w-[163px] mr-[4px] shrink-0 flex flex-col pt-[4px] h-full">
    <DockHeader title="构件列表" />
    <div className="h-[27px] shrink-0 flex items-center pl-[5px] bg-[#f7f7f7]">
      <Tool icon="plusdoc" label="新建" dd />
      <span className="flex ml-[10px]">{I.x}</span>
      <span className="flex ml-[7px]">{I.dup}</span>
    </div>
    <div className="h-[25px] shrink-0 flex items-center bg-[#f7f7f7] pl-[2px]">
      <span className="w-[136px] h-[22px] bg-white flex items-center pl-[2px] text-[#9a9a9a]">搜索构件...</span>
      <span className="flex ml-[7px]">{I.search}</span>
    </div>
    <div className="h-[572px] shrink-0 mt-[1px] border border-[#8a8a8a] bg-white flex overflow-hidden text-[#222]">
      <div className="flex-1 min-w-0 overflow-hidden pt-[1px] pl-[10px]">
        <div className="flex items-center h-4">
          <Tri open />
          <span className="w-[8px]" />
          <span className="flex">{I.cad}</span>
          <span className="ml-[4px] whitespace-nowrap">识别柱大样</span>
        </div>
        <div className="ml-[21px]">
          {ybz.map((n) => (
            <div key={n} className="flex items-center h-4">
              <Conn last={n === '27'} />
              <span className={clsx('flex items-center h-4 pl-[3px] -ml-[1px] w-[57px]', n === '11' && 'bg-[#2e67bd]')}>
                <span className="flex w-[14px] h-[14px] [&_svg]:w-[14px] [&_svg]:h-[14px]">{I.gear}</span>
                <span className="ml-[6px]"><Latin>YBZ{n}</Latin></span>
              </span>
            </div>
          ))}
        </div>
      </div>
      <div className="w-[15px] shrink-0 bg-[#f4f4f4] flex flex-col items-center">
        <span className="h-[19px] flex items-center"><ScrollArrow /></span>
        <Thumb className="w-[14px] h-[517px] bg-[#e0e0e0]" />
        <span className="flex-1 flex items-center"><ScrollArrow down /></span>
      </div>
    </div>
    <DockHeader title="图纸管理" className="mt-[7px]" />
    <div className="flex h-[22px] shrink-0 items-end">
      <span className="w-[87px] h-[22px] bg-[#f7f7f7] border border-b-0 border-[#9a9a9a] flex items-center pl-[6px] whitespace-nowrap">图纸文件列表</span>
      <span className="w-[44px] h-[19px] bg-[#ececec] border border-[#b4b4b4] overflow-hidden whitespace-nowrap pl-[3px]">图纸楼层构件</span>
      <span className="w-[30px] h-[16px] ml-[2px] mb-[1px] flex">
        <span className="flex-1 bg-[#e0e6ec] border border-[#c0c8d0] flex items-center justify-center"><span className="w-0 h-0 border-y-[3px] border-r-[4px] border-y-transparent border-r-[#4a6f9a]" /></span>
        <span className="flex-1 bg-[#e0e6ec] border border-[#c0c8d0] flex items-center justify-center"><span className="w-0 h-0 border-y-[3px] border-l-[4px] border-y-transparent border-l-[#4a6f9a]" /></span>
      </span>
    </div>
    <div className="flex-1 min-h-0 border border-[#9a9a9a] border-b-0 bg-[#f7f7f7] px-[4px] pt-[3px] overflow-hidden">
      <div className="flex h-[23px] items-stretch">
        <span className="w-[57px] border border-[#a8a8a8] bg-[#eee] flex items-center justify-center text-[#b0601a] [text-shadow:0_0_1px_#2a8a8a]">添加图纸</span>
        <span className="w-[13px] border-y border-[#a8a8a8] bg-[#eee] flex items-center justify-center"><Caret /></span>
        <span className="w-[57px] border border-[#a8a8a8] bg-[#eee] flex items-center justify-center text-[#222] [text-shadow:0_0_1px_#b0601a]">整理图纸</span>
        <span className="ml-[15px] w-[11px] border-b border-[#a8a8a8] border-r font-bold text-[9px] leading-[10px] font-['Liberation_Sans',sans-serif]">&gt;&gt;</span>
      </div>
      <div className="mt-[2px] border border-[#a8a8a8] bg-[#f0f0f0] flex text-[#111]">
        <div className="w-[135px] shrink-0">
          <div className="flex h-[25px]">
            <span className="w-[21px] bg-[#f8f8f8]" />
            <span className="flex-1 bg-[linear-gradient(180deg,#fbdfa8,#edbb6a)] flex items-center pl-[52px] text-[#6a0a6a] whitespace-nowrap">图纸名称</span>
          </div>
          <SheetRow n={1} head label="FLAA5DRQ_S30-" tail="墙柱" selected />
          <SheetRow n={2} label="首层~四层墙柱." />
          <SheetRow n={3} label="首层~四层柱表." />
          <SheetRow n={4} head label="FLAA5DUW_S40-" tail="地_" />
          <SheetRow n={5} label="二~三层梁配筋图" />
          <SheetRow n={6} label="四~八层梁配筋图" />
          <SheetRow n={7} label="九~十三层梁配筋" />
          <SheetRow n={8} label="十四~十八层梁配筋" />
          <SheetRow n={9} label="十九~二十三层梁配" />
        </div>
        <div className="w-[16px] flex flex-col items-center pt-[7px]">
          <ScrollArrow />
          <Thumb className="w-[15px] h-[46px] mt-[5px]" />
        </div>
      </div>
    </div>
  </div>
);

const hex = (cx: number, cy: number, r: number) =>
  Array.from({ length: 6 }, (_, i) => {
    const a = (Math.PI / 3) * i - Math.PI / 2;
    return `${(cx + r * Math.cos(a)).toFixed(1)},${(cy + r * Math.sin(a)).toFixed(1)}`;
  }).join(' ');

const topCols: [number, string][] = [[643, '6-1'], [660, '6-2'], [699, '6-4'], [733, '14-5'], [768, '6-6'], [798, '14-8'], [803, '6-8'], [841, '6-11'], [858, '14-12'], [876, '6-12'], [912, '6-13'], [935, '14-15'], [953, '6-16'], [982, '6-17'], [1011, '14-19'], [1029, '14-21'], [1052, '6-20'], [1089, '14-24'], [1106, '14-25'], [1124, '6-24'], [1161, '6-25'], [1166, '6-27'], [1197, '6-30'], [1231, '14-31'], [1276, '6-33'], [1315, '6-34'], [1334, '14-35']];
const botCols: [number, string][] = [[643, '6-1'], [687, '14-3'], [733, '14-5'], [780, '14-7'], [816, '14-10'], [858, '14-12'], [900, '14-13'], [935, '14-16'], [982, '6-18'], [1029, '14-20'], [1065, '14-22'], [1106, '14-24'], [1148, '14-26'], [1184, '14-29'], [1231, '14-31'], [1269, '14-32'], [1315, '6-34'], [1334, '14-35']];
const botDims = [3400, 3700, 3700, 2800, 3300, 3300, 2800, 3700, 3700, 2800, 3300, 3300, 2800, 3700, 3000, 3600, 1500];
const leftRows: [number, string][] = [[478, '6-R'], [503, '6-P'], [508, '6-M'], [512, '6-1/N'], [544, '6-L'], [570, '6-J'], [592, '6-G'], [619, '6-E'], [636, '6-1/E'], [652, '6-D'], [664, '6-1/C'], [671, '6-B'], [686, '6-1/B'], [695, '6-A']];
const rightRows: [number, string][] = [[477, '6-R'], [492, '6-Q'], [507, '6-P'], [512, '6-1/N'], [536, '6-M'], [544, '6-L'], [563, '6-K'], [587, '6-H'], [614, '6-F'], [637, '6-1/E'], [658, '6-C'], [671, '6-B'], [687, '6-1/B'], [696, '6-A']];

// wall and grid pieces, in the pixel grid of the two 3x crops
const greenA: Seg[] = [[355, 369, 580, 369, 9], [580, 370, 685, 370, 9], [358, 343, 358, 375, 9], [358, 525, 358, 630, 9], [440, 493, 1240, 493, 9], [482, 493, 482, 637, 6], [362, 570, 480, 570, 3], [310, 639, 355, 639, 3], [684, 380, 684, 490, 5], [580, 432, 684, 432, 5], [585, 473, 684, 473, 5], [685, 379, 780, 379, 4], [778, 380, 778, 490, 5], [777, 495, 777, 545, 14], [785, 477, 1240, 477, 5], [583, 549, 1240, 549, 9], [1240, 495, 1240, 553, 8], [903, 688, 1008, 688, 7], [725, 722, 900, 722, 5], [875, 722, 875, 788, 9], [830, 788, 1080, 788, 4], [1035, 722, 1035, 788, 5], [1010, 722, 1190, 722, 5], [725, 770, 765, 770, 8], [1145, 770, 1185, 770, 8], [400, 717, 440, 717, 6], [310, 855, 440, 855, 8], [442, 873, 575, 873, 5], [442, 860, 442, 873, 5], [580, 880, 580, 945, 11], [580, 943, 720, 943, 7], [720, 925, 720, 945, 10], [745, 920, 1165, 920, 11], [1190, 943, 1260, 943, 7], [1187, 925, 1187, 945, 6], [309, 860, 309, 885, 12], [440, 640, 440, 690, 3], [615, 291, 652, 291, 11]];
const purpleA: Seg[] = [[652, 291, 698, 291, 11], [612, 291, 580, 325, 10], [579, 320, 579, 335, 8], [763, 291, 783, 291, 11], [777, 291, 777, 308, 10], [358, 478, 358, 525, 10], [358, 493, 375, 493, 7], [430, 493, 442, 493, 8], [482, 483, 482, 498, 8], [579, 483, 579, 498, 11], [778, 470, 778, 495, 13], [580, 545, 580, 560, 5], [722, 549, 737, 549, 7], [722, 549, 722, 580, 7], [770, 549, 783, 549, 9], [1187, 549, 1187, 580, 9], [1180, 549, 1203, 549, 8], [723, 622, 746, 622, 7], [787, 622, 820, 622, 7], [790, 622, 790, 640, 7], [877, 622, 905, 622, 7], [901, 622, 901, 640, 7], [1006, 622, 1035, 622, 7], [1009, 622, 1009, 640, 7], [1092, 622, 1120, 622, 7], [1118, 622, 1118, 640, 7], [1164, 622, 1190, 622, 7], [1186, 622, 1186, 640, 7], [1234, 400, 1255, 400, 9], [1240, 400, 1240, 415, 9], [1240, 478, 1240, 498, 9], [1234, 493, 1255, 493, 8], [309, 640, 309, 650, 10], [309, 702, 309, 730, 11], [303, 717, 328, 717, 7], [388, 717, 400, 717, 7], [440, 802, 440, 860, 10], [440, 820, 475, 820, 9], [552, 817, 580, 817, 7], [580, 802, 580, 835, 8], [412, 855, 445, 855, 9], [578, 858, 578, 880, 10], [575, 875, 605, 875, 11], [685, 875, 725, 875, 11], [720, 858, 720, 925, 9], [715, 920, 745, 920, 12], [1187, 858, 1187, 925, 12], [1187, 875, 1223, 875, 11], [1165, 920, 1190, 920, 11], [925, 920, 985, 920, 12], [829, 912, 829, 928, 8], [1081, 912, 1081, 928, 8], [790, 712, 790, 725, 8], [901, 712, 901, 725, 8], [1009, 712, 1009, 725, 8], [1117, 712, 1117, 725, 8], [1186, 712, 1186, 725, 8], [765, 770, 780, 770, 7], [815, 770, 835, 770, 7], [830, 770, 830, 785, 7], [1080, 770, 1095, 770, 7], [1081, 770, 1081, 785, 7], [1130, 770, 1145, 770, 7], [1187, 765, 1187, 778, 7], [440, 680, 440, 695, 5], [955, 683, 955, 698, 7], [455, 368, 513, 368, 11], [482, 368, 482, 385, 7], [310, 849, 310, 860, 10]];
const redA: Seg[] = [[310, 295, 310, 332, 3], [361, 295, 361, 640, 3], [478, 370, 478, 495, 3], [685, 295, 685, 378, 3], [775, 335, 775, 492, 3], [790, 295, 790, 720, 3], [902, 295, 902, 720, 3], [1009, 295, 1009, 720, 3], [1117, 295, 1117, 720, 3], [1240, 295, 1240, 550, 3], [442, 493, 442, 908, 3], [721, 549, 721, 925, 3], [829, 720, 829, 910, 3], [1081, 720, 1081, 910, 3], [580, 905, 580, 945, 3], [955, 905, 955, 945, 3], [310, 370, 580, 370, 3], [580, 379, 790, 379, 3], [310, 569, 478, 569, 3], [310, 637, 480, 637, 3], [722, 622, 1260, 622, 3], [310, 718, 1260, 718, 3], [310, 769, 1260, 769, 3], [722, 549, 1260, 549, 3], [310, 817, 580, 817, 3], [310, 853, 580, 853, 3]];
const greenB: Seg[] = [[0, 493, 845, 493, 9], [103, 400, 103, 495, 6], [10, 480, 10, 555, 8], [0, 549, 845, 549, 8], [187, 378, 187, 495, 5], [187, 495, 187, 555, 9], [187, 379, 415, 379, 8], [223, 380, 223, 493, 8], [415, 380, 415, 493, 4], [418, 477, 640, 477, 5], [97, 550, 97, 665, 6], [648, 380, 648, 490, 5], [648, 495, 648, 545, 12], [648, 379, 718, 379, 5], [745, 371, 843, 371, 8], [741, 380, 741, 490, 5], [741, 432, 845, 432, 5], [741, 473, 845, 473, 5], [775, 291, 810, 291, 11], [850, 336, 965, 336, 8], [912, 336, 912, 468, 5], [845, 471, 983, 471, 4], [982, 420, 982, 470, 3], [1110, 470, 1150, 470, 5], [1150, 441, 1150, 620, 9], [1100, 620, 1150, 620, 5], [845, 622, 955, 622, 6], [958, 625, 958, 665, 5], [420, 688, 523, 688, 7], [243, 721, 415, 721, 7], [391, 722, 391, 788, 8], [347, 788, 595, 788, 4], [550, 722, 550, 788, 8], [527, 721, 705, 721, 7], [243, 770, 280, 770, 8], [660, 770, 700, 770, 8], [260, 920, 685, 920, 11], [0, 943, 235, 943, 7], [238, 925, 238, 945, 10], [705, 943, 845, 943, 7], [703, 925, 703, 945, 10], [846, 880, 846, 945, 10], [850, 877, 945, 877, 7], [945, 840, 945, 877, 5], [995, 832, 1100, 832, 8], [1098, 835, 1098, 862, 10]];
const purpleB: Seg[] = [[3, 400, 27, 400, 9], [10, 400, 10, 415, 9], [3, 493, 27, 493, 8], [10, 478, 10, 498, 9], [87, 400, 105, 400, 8], [87, 493, 105, 493, 8], [155, 400, 190, 400, 9], [187, 400, 187, 415, 7], [183, 490, 192, 490, 12], [27, 549, 42, 549, 8], [155, 549, 168, 549, 8], [222, 549, 243, 549, 8], [238, 549, 238, 580, 9], [690, 549, 708, 549, 8], [703, 549, 703, 580, 9], [234, 622, 262, 622, 7], [238, 622, 238, 638, 9], [304, 622, 333, 622, 7], [307, 622, 307, 638, 7], [390, 622, 418, 622, 7], [415, 622, 415, 638, 7], [520, 622, 552, 622, 7], [523, 622, 523, 638, 7], [610, 622, 638, 622, 7], [634, 622, 634, 638, 7], [682, 622, 708, 622, 7], [703, 622, 703, 638, 7], [238, 712, 238, 725, 8], [307, 712, 307, 725, 8], [416, 712, 416, 725, 7], [523, 712, 523, 725, 8], [634, 712, 634, 725, 8], [703, 712, 703, 725, 7], [238, 765, 238, 778, 8], [282, 769, 297, 769, 7], [330, 769, 347, 769, 7], [346, 769, 346, 785, 6], [595, 769, 612, 769, 7], [597, 769, 597, 785, 6], [645, 769, 660, 769, 7], [703, 765, 703, 778, 7], [97, 658, 97, 672, 7], [642, 291, 665, 291, 11], [647, 291, 647, 308, 10], [726, 291, 775, 291, 11], [742, 291, 742, 305, 7], [810, 291, 845, 325, 10], [846, 320, 846, 342, 12], [965, 336, 983, 336, 10], [980, 336, 980, 352, 6], [1065, 336, 1103, 336, 10], [1098, 336, 1098, 352, 10], [648, 470, 648, 495, 13], [846, 483, 846, 498, 11], [643, 549, 657, 549, 8], [844, 545, 844, 560, 8], [1098, 457, 1098, 498, 10], [1090, 470, 1105, 470, 6], [1098, 600, 1098, 645, 10], [1080, 622, 1105, 622, 7], [955, 622, 968, 622, 8], [958, 665, 958, 680, 8], [1097, 675, 1097, 690, 11], [845, 818, 845, 875, 12], [845, 832, 872, 832, 9], [822, 875, 850, 875, 11], [942, 832, 995, 832, 10], [958, 818, 958, 832, 6], [1097, 825, 1097, 850, 11], [75, 875, 120, 875, 12], [97, 858, 97, 885, 12], [200, 875, 240, 875, 12], [238, 858, 238, 925, 12], [232, 920, 262, 920, 12], [703, 858, 703, 925, 12], [703, 875, 742, 875, 12], [682, 920, 710, 920, 12], [442, 920, 500, 920, 12], [345, 912, 345, 928, 6], [597, 912, 597, 928, 6], [402, 380, 418, 380, 8], [415, 375, 415, 395, 6], [718, 379, 745, 379, 8], [647, 370, 647, 385, 10], [470, 683, 470, 697, 6]];
const redB: Seg[] = [[10, 295, 10, 550, 3], [97, 295, 97, 945, 3], [184, 335, 184, 553, 3], [307, 295, 307, 703, 3], [418, 295, 418, 703, 3], [523, 295, 523, 703, 3], [634, 335, 634, 703, 3], [649, 295, 649, 545, 3], [742, 295, 742, 378, 3], [346, 703, 346, 908, 3], [595, 703, 595, 908, 3], [703, 703, 703, 945, 3], [979, 295, 979, 495, 3], [958, 620, 958, 908, 3], [1096, 295, 1096, 945, 3], [1153, 292, 1153, 333, 3], [470, 905, 470, 945, 3], [634, 334, 1113, 334, 3], [635, 379, 1113, 379, 3], [843, 469, 1113, 469, 3], [1113, 397, 1150, 397, 3], [1113, 493, 1150, 493, 3], [0, 549, 1150, 549, 3], [0, 622, 1113, 622, 3], [97, 703, 1113, 703, 3], [0, 718, 97, 718, 3], [0, 769, 1150, 769, 3], [845, 835, 1113, 835, 3], [1113, 874, 1150, 874, 3], [1113, 919, 1150, 919, 3], [1113, 946, 1150, 946, 3], [1113, 292, 1153, 292, 3]];

const Segs = ({ list, color }: { list: Seg[]; color: string }) => (
  <g stroke={color} fill="none">
    {list.map(([a, b, c, d, w], i) => <line key={i} x1={a} y1={b} x2={c} y2={d} strokeWidth={w} />)}
  </g>
);

const dimLabel = (d: number) => `${Math.max(1, Math.round(d / 1.27)) * 100}`;
const labelCls = "font-['DejaVu_Sans_Condensed','DejaVu_Sans',sans-serif] text-[17.500px] fill-[#cdcdcd]";

const CadDrawing = () => (
  <svg viewBox="335 189 1583 798" className="block w-full h-full" shapeRendering="crispEdges">
    {/* axis lines */}
    <g stroke="#0c800c" fill="none">
      {topCols.map(([x]) => <line key={x} x1={x} y1={420} x2={x} y2={478} />)}
      {botCols.map(([x]) => <line key={x} x1={x} y1={695} x2={x} y2={753} />)}
      {leftRows.map(([y]) => <line key={y} x1={586} y1={y} x2={643} y2={y} />)}
      {rightRows.map(([y]) => <line key={y} x1={1334} y1={y} x2={1392} y2={y} />)}
      <line x1={643} y1={440} x2={1334} y2={440} />
      <line x1={643} y1={458} x2={1334} y2={458} />
      <line x1={643} y1={714} x2={1334} y2={714} />
      <line x1={643} y1={733} x2={1334} y2={733} />
      <line x1={605} y1={478} x2={605} y2={695} />
      <line x1={625} y1={478} x2={625} y2={695} />
      <line x1={1373} y1={477} x2={1373} y2={696} />
      <line x1={1355} y1={477} x2={1355} y2={696} />
    </g>
    <g transform="translate(540 380) scale(0.33333)">
      <Segs list={greenA} color="#00ff00" />
      <Segs list={purpleA} color="#7f00ff" />
      <Segs list={redA} color="#ff0000" />
    </g>
    <g transform="translate(950 380) scale(0.33333)">
      <Segs list={greenB} color="#00ff00" />
      <Segs list={purpleB} color="#7f00ff" />
      <Segs list={redB} color="#ff0000" />
    </g>
    {/* bubbles */}
    <g stroke="#0c800c" fill="none" shapeRendering="auto">
      {topCols.map(([x]) => <polygon key={x} points={hex(x, 407, 13)} />)}
      {botCols.map(([x]) => <polygon key={x} points={hex(x, 766, 13)} />)}
      {leftRows.map(([y]) => <polygon key={y} points={hex(573, y, 13)} />)}
      {rightRows.map(([y]) => <polygon key={y} points={hex(1404, y, 13)} />)}
    </g>
    <g textAnchor="middle" className={labelCls} shapeRendering="auto">
      {topCols.map(([x, t]) => <text key={x} x={x + 2} y={413}>{t}</text>)}
      {botCols.map(([x, t]) => <text key={x} x={x + 2} y={772}>{t}</text>)}
      {leftRows.map(([y, t]) => <text key={y} x={577} y={y + 6}>{t}</text>)}
      {rightRows.map(([y, t]) => <text key={y} x={1407} y={y + 6}>{t}</text>)}
      <text x={994} y={439}>54400</text>
      <text x={994} y={733}>54400</text>
      {topCols.slice(1).map(([x, ], i) => <text key={x} x={(x + topCols[i][0]) / 2 + 4.5} y={458}>{dimLabel(x - topCols[i][0])}</text>)}
      {botCols.slice(1).map(([x, ], i) => <text key={x} x={(x + botCols[i][0]) / 2 + 4.5} y={714}>{botDims[i]}</text>)}
      <text transform="translate(618 581) rotate(-90)">17150</text>
      <text transform="translate(1384 581) rotate(-90)">17150</text>
      {leftRows.slice(1).map(([y, ], i) => <text key={y} transform={`translate(637 ${(y + leftRows[i][0]) / 2}) rotate(-90)`}>{dimLabel(y - leftRows[i][0])}</text>)}
      {rightRows.slice(1).map(([y, ], i) => <text key={y} transform={`translate(1365 ${(y + rightRows[i][0]) / 2}) rotate(-90)`}>{dimLabel(y - rightRows[i][0])}</text>)}
    </g>
    {/* origin marker */}
    <path d="M388 937V897h-4l4-5 0-4h4v4l4 5h-4v40z" fill="#00ff00" />
    <path d="M390 935h35v-3l9 2h5v4h-5l-9 2v-3h-35z" fill="#ff0000" />
    <text x={400} y={899} className="font-['Liberation_Sans',sans-serif] text-[12px] fill-[#00ff00]" shapeRendering="auto">Y</text>
    <text x={427} y={925} className="font-['Liberation_Sans',sans-serif] text-[12px] fill-[#ff0000]" shapeRendering="auto">X</text>
  </svg>
);

export default function App() {
  return (
    <div className="relative w-[1918px] h-[987px] overflow-hidden flex flex-col bg-[#efefef] text-[12px] leading-[14px] font-['Noto_Sans_CJK_SC','Noto_Sans',sans-serif]">
      <TitleBar />
      <MenuBar />
      <MainToolbar />
      <div className="flex flex-1 min-h-0">
        <NavPanel />
        <ListPanel />
        <div className="flex-1 min-w-0 flex flex-col">
          <DrawToolbars />
          <div className="flex-1 min-h-0 bg-black">
            <CadDrawing />
          </div>
        </div>
      </div>
      {/* red callout arrow over the toolbar */}
      <svg className="absolute left-[555px] top-[125px] w-[90px] h-[80px]" viewBox="555 125 90 80">
        <path d="M635 133L615 139L619 144L563 198L623 148L627 152z" fill="#ee3a2c" />
      </svg>
      <svg width="0" height="0" className="absolute">
        <defs>
          <linearGradient id="fld" x1="0" y1="0" x2="0" y2="1">
            <stop offset="0" stopColor="#fdf0c0" />
            <stop offset="1" stopColor="#eec25c" />
          </linearGradient>
        </defs>
      </svg>
    </div>
  );
}
